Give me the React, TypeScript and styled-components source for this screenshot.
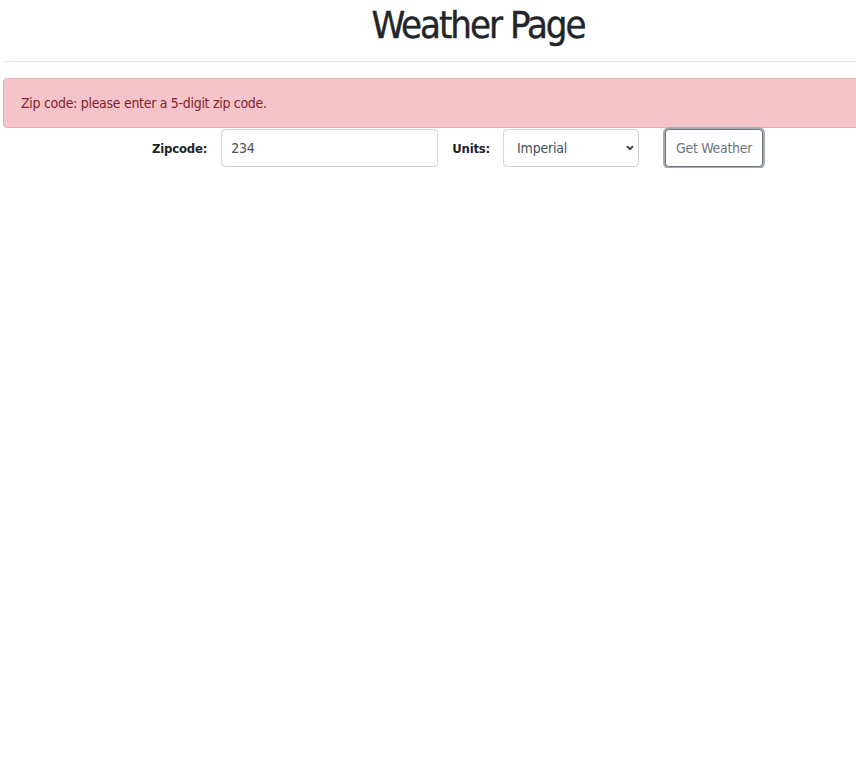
import React from "react";
import styled, { createGlobalStyle } from "styled-components";

const Global = createGlobalStyle`
  html, body { margin: 0; padding: 0; background: #fff; overflow-x: hidden; }
  body { font-family: "DejaVu Sans Condensed", "Liberation Sans", sans-serif; color: #212529; }
`;

const Page = styled.div`
  width: 950px;
  padding-left: 3px;
`;

const Title = styled.h1`
  margin: 0;
  padding-top: 1px;
  height: 60px;
  text-align: center;
  font-size: 38px;
  font-weight: 400;
  letter-spacing: -2px;
  line-height: 48px;
  color: #212529;
  -webkit-text-stroke: 0.4px #212529;
`;

const Rule = styled.hr`
  margin: 0;
  border: 0;
  border-top: 1px solid #e3e3e3;
`;

const Alert = styled.div`
  margin-top: 16px;
  height: 48px;
  display: flex;
  align-items: center;
  padding: 0 17px;
  background: #f5c4cb;
  border: 1px solid #e6b0b7;
  border-radius: 4px;
  color: #842029;
  font-size: 14px;
  letter-spacing: -0.3px;
`;

const Form = styled.form`
  display: flex;
  align-items: center;
  height: 40px;
  padding-left: 149px;
`;

const Label = styled.label<{ $gap: number }>`
  font-weight: 700;
  font-size: 13px;
  letter-spacing: -0.2px;
  margin-right: ${(p) => p.$gap}px;
  color: #212529;
`;

const Input = styled.input`
  box-sizing: border-box;
  width: 217px;
  height: 38px;
  margin-right: 14px;
  padding: 0 9px;
  border: 1px solid #ced4da;
  border-radius: 4px;
  font-family: inherit;
  font-size: 14px;
  letter-spacing: -0.2px;
  color: #495057;
  outline: none;
`;

const SelectWrap = styled.div`
  position: relative;
  width: 136px;
  height: 38px;
  margin-right: 26px;
`;

const Select = styled.select`
  box-sizing: border-box;
  appearance: none;
  width: 100%;
  height: 100%;
  padding: 0 13px;
  border: 1px solid #ced4da;
  border-radius: 4px;
  background: #fff;
  font-family: inherit;
  font-size: 14px;
  letter-spacing: -0.2px;
  color: #495057;
  outline: none;
`;

const Chevron = styled.svg`
  position: absolute;
  right: 5px;
  top: 16px;
  pointer-events: none;
`;

const Button = styled.button`
  box-sizing: border-box;
  width: 98px;
  height: 38px;
  border: 1px solid #6c757d;
  border-radius: 4px;
  background: #fff;
  box-shadow: 0 0 0 2px #a7abaf;
  font-family: inherit;
  font-size: 14px;
  letter-spacing: -0.3px;
  color: #6c757d;
  padding: 0;
`;

export default function App() {
  return (
    <Page>
      <Global />
      <Title>Weather Page</Title>
      <Rule />
      <Alert>Zip code: please enter a 5-digit zip code.</Alert>
      <Form onSubmit={(e) => e.preventDefault()}>
        <Label htmlFor="zip" $gap={14}>Zipcode:</Label>
        <Input id="zip" defaultValue="234" />
        <Label htmlFor="units" $gap={13}>Units:</Label>
        <SelectWrap>
          <Select id="units" defaultValue="imperial">
            <option value="imperial">Imperial</option>
            <option value="metric">Metric</option>
          </Select>
          <Chevron width="8" height="6" viewBox="0 0 8 6">
            <path d="M1 1.2 L4 4.2 L7 1.2" fill="none" stroke="#343a40" strokeWidth="1.8" />
          </Chevron>
        </SelectWrap>
        <Button type="submit">Get Weather</Button>
      </Form>
    </Page>
  );
}
